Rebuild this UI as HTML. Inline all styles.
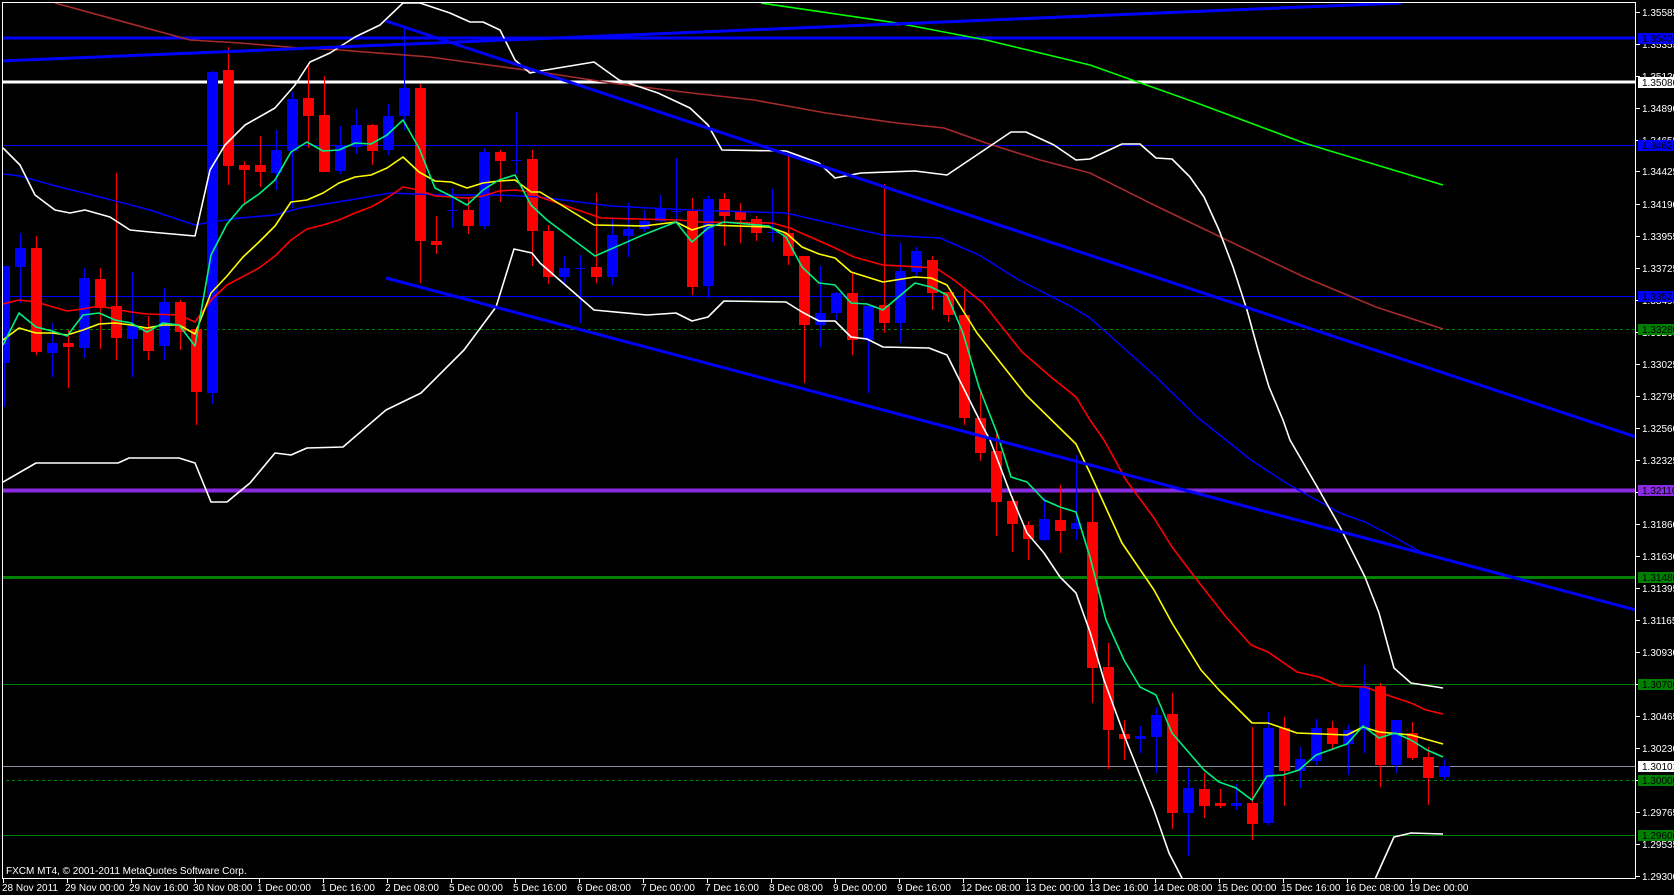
<!DOCTYPE html>
<html><head><meta charset="utf-8"><style>
html,body{margin:0;padding:0;background:#000;width:1674px;height:895px;overflow:hidden}
svg{display:block}
text{font-family:"Liberation Sans",sans-serif;font-size:10px}
</style></head><body>
<svg id="s" width="1674" height="895" xmlns="http://www.w3.org/2000/svg">
<defs><clipPath id="c"><rect x="3" y="3" width="1633" height="875"/></clipPath></defs>
<rect width="1674" height="895" fill="#000"/>
<g id="chart" clip-path="url(#c)">
<line x1="0" y1="38" x2="1636" y2="38" stroke="#0000ff" stroke-width="3"/>
<line x1="0" y1="82" x2="1636" y2="82" stroke="#fff" stroke-width="3"/>
<line x1="0" y1="145.5" x2="1636" y2="145.5" stroke="#0000ff" stroke-width="1"/>
<line x1="0" y1="296.5" x2="1636" y2="296.5" stroke="#0000ff" stroke-width="1"/>
<line x1="0" y1="329.5" x2="1636" y2="329.5" stroke="#008000" stroke-width="1" stroke-dasharray="3,3"/>
<line x1="0" y1="490.5" x2="1636" y2="490.5" stroke="#8a2be2" stroke-width="4"/>
<line x1="0" y1="577.5" x2="1636" y2="577.5" stroke="#008000" stroke-width="3"/>
<line x1="0" y1="684.5" x2="1636" y2="684.5" stroke="#008000" stroke-width="1"/>
<line x1="0" y1="766.5" x2="1636" y2="766.5" stroke="#8c8c9c" stroke-width="1"/>
<line x1="0" y1="780.5" x2="1636" y2="780.5" stroke="#008000" stroke-width="1" stroke-dasharray="3,3"/>
<line x1="0" y1="835.5" x2="1636" y2="835.5" stroke="#008000" stroke-width="1"/>
<g id="candles"></g>
<g id="ind" fill="none" stroke-linejoin="round"></g>
<line x1="0" y1="61" x2="1401" y2="3" stroke="#0000ff" stroke-width="3"/>
<line x1="386" y1="21" x2="1636" y2="437" stroke="#0000ff" stroke-width="3"/>
<line x1="386" y1="278" x2="1636" y2="610" stroke="#0000ff" stroke-width="3"/>
</g>
<rect x="2.5" y="2.5" width="1633" height="876" fill="none" stroke="#fff" stroke-width="1"/>
<text x="6" y="874" fill="#fff">FXCM MT4, © 2001-2011 MetaQuotes Software Corp.</text>
<g id="axis"></g>
</svg>
<script>
var NS="http://www.w3.org/2000/svg";
function el(p,n,a,t){var e=document.createElementNS(NS,n);for(var k in a)e.setAttribute(k,a[k]);if(t!==undefined)e.textContent=t;p.appendChild(e);return e;}
var C=[
"b 266 363 266 407","b 248 267 233 303","r 248 352 236 355","b 343 353 323 377","r 343 347 330 388","b 278 348 268 358","r 279 308 268 349","r 306 338 173 360","b 326 339 272 377","r 328 351 316 360",
"b 302 346 288 360","r 302 332 300 350","r 329 392 327 425","b 72 393 71 404","r 70 166 47 185","r 165 170 161 203","r 165 172 136 187","b 150 173 130 190","b 99 151 92 208","r 98 116 65 148",
"r 115 172 76 172","b 145 171 126 174","b 125 147 109 154","r 125 151 124 165","b 116 150 104 155","b 88 116 27 130","r 88 241 84 283","r 241 245 216 254","b 210 211 188 228","r 210 226 198 234",
"b 152 226 148 229","r 152 161 150 202","b 160 161 112 174","r 159 231 150 266","r 231 277 225 284","b 268 277 256 283","b 268 269 255 323","r 267 277 193 283","b 235 277 218 285","b 229 236 203 257",
"b 221 229 210 232","b 209 221 195 222","b 211 212 158 222","r 211 287 198 295","b 199 286 196 298","r 199 216 193 246","r 212 220 203 243","r 219 233 216 241","b 232 233 189 242","r 233 256 156 265",
"r 256 325 256 383","b 313 325 266 347","b 293 313 292 320","r 293 340 272 355","b 306 340 306 393","r 305 323 184 333","b 271 323 243 343","b 251 272 247 276","r 260 293 256 310","r 292 315 292 322",
"r 315 418 290 425","r 418 453 392 461","r 451 502 430 536","r 501 524 496 552","r 525 539 521 560","b 519 540 498 541","r 520 531 485 553","b 523 529 455 540","r 522 668 493 703","r 667 730 643 769",
"r 734 739 720 760","b 736 739 726 753","b 715 737 707 773","r 714 813 693 829","b 788 813 768 856","r 789 806 773 818","r 803 806 789 808","b 803 806 784 810","r 803 824 727 840","b 728 823 712 825",
"r 728 771 717 806","b 759 771 747 788","b 728 761 719 765","r 728 744 721 749","b 730 744 725 775","b 686 730 665 753","r 686 765 683 787","b 720 765 720 773","r 733 758 722 760","r 757 778 747 805","b 766 777 759 780"];
var g=document.getElementById("candles");
C.forEach(function(s,i){var a=s.split(" ");var col=a[0]=="b"?"#0000ff":"#ff0000";var t=+a[1],b=+a[2],h=+a[3],l=+a[4];var x=Math.round(3.6+16*i);
el(g,"rect",{x:x,y:h,width:1,height:Math.max(1,l-h),fill:col});
el(g,"rect",{x:x-5,y:t,width:11,height:Math.max(1,b-t),fill:col});});
var L={
"#a52a2a":"55,3 190,40 240,43 300,48 340,50 430,57 540,72 611,83 683,92 754,100 826,113 897,123 944,128 986,143 1040,160 1090,173 1154,205 1233,243 1304,277 1376,307 1443,329",
"#00ff00":"761,3 897,23 986,40 1090,65 1197,103 1304,143 1443,185",
"#0000ff":"3,174 20,176 52,185 100,197 150,210 195,225 211,222 240,218 275,215 300,208 350,200 390,193 440,195 500,195 540,197 611,206 690,210 786,213 851,228 883,235 940,238 979,255 1019,280 1072,307 1090,318 1126,350 1154,375 1197,417 1226,440 1251,460 1286,483 1340,513 1365,522 1394,537 1426,555 1447,560",
"#ff0000":"3,304 19,300 36,302 67,311 83,309 99,306 131,312 147,314 179,315 195,322 211,300 227,285 259,268 275,256 291,240 307,229 323,225 339,220 355,213 371,207 387,198 403,187 419,190 435,196 451,197 467,198 483,196 499,191 515,190 531,192 540,197 601,218 679,220 701,222 772,223 790,228 833,247 854,257 883,265 936,268 954,280 983,303 1022,352 1051,377 1076,397 1090,420 1104,440 1126,480 1154,518 1172,547 1197,580 1226,617 1251,645 1268,652 1297,672 1319,677 1340,686 1365,687 1390,696 1411,703 1426,710 1443,714",
"#ffff00":"3,340 19,328 36,333 52,333 67,335 83,330 99,324 115,323 131,325 147,328 163,325 179,325 195,334 211,293 227,276 243,257 259,242 275,226 291,202 307,200 323,193 339,183 355,177 371,175 387,168 403,157 419,172 435,181 451,182 467,188 483,183 499,181 515,180 531,192 540,192 594,225 644,226 676,222 692,230 708,225 769,227 786,233 802,247 819,254 835,258 851,272 883,282 915,277 931,278 947,285 977,333 1026,395 1076,444 1090,473 1122,543 1154,590 1172,623 1201,670 1219,690 1252,723 1268,723 1297,733 1347,735 1363,727 1379,732 1411,735 1443,744",
"#00f080":"3,345 19,313 36,327 52,331 67,336 83,315 99,313 115,320 131,323 147,332 163,323 179,325 195,346 211,255 227,224 243,205 259,194 275,180 291,152 307,142 323,151 339,150 355,143 371,144 387,135 403,120 419,148 435,188 451,196 467,205 483,190 499,180 515,175 531,205 547,220 595,256 643,235 676,222 692,242 708,228 724,222 769,226 786,237 802,267 819,283 835,285 851,303 867,304 883,310 915,283 931,287 947,295 963,333 979,387 997,433 1011,477 1027,482 1044,500 1060,507 1076,512 1090,557 1106,620 1124,660 1140,687 1156,695 1172,733 1204,770 1219,782 1236,788 1252,800 1267,776 1283,775 1299,770 1316,755 1347,744 1363,726 1379,738 1395,733 1411,740 1427,750 1443,757"
};
var ind=document.getElementById("ind");
for(var k in L){el(ind,"polyline",{points:L[k],stroke:k,"stroke-width":k=="#0000ff"?1.5:1.6});}
el(ind,"polyline",{points:"3,148 20,165 35,195 55,210 70,213 85,210 110,217 130,230 150,232 195,236 210,170 225,145 245,125 275,108 295,85 310,62 330,53 355,37 380,25 403,3 420,3 450,13 470,22 483,22 500,30 515,60 530,73 540,71 594,62 619,80 658,93 690,108 708,125 722,150 786,151 819,163 835,178 861,173 915,171 947,175 1011,132 1026,132 1054,145 1076,160 1090,159 1122,144 1140,144 1156,158 1172,159 1190,177 1204,197 1219,230 1233,267 1247,310 1258,350 1269,387 1283,420 1290,440 1319,490 1340,527 1365,577 1379,613 1394,668 1411,683 1443,688",stroke:"#fff","stroke-width":1.6});
el(ind,"polyline",{points:"3,482 36,463 118,463 129,458 179,458 195,463 211,502 227,502 250,483 275,453 291,455 307,448 343,447 386,410 421,393 464,350 496,307 514,249 532,253 540,263 594,310 647,315 676,313 692,321 708,317 724,301 786,302 802,312 819,321 835,321 851,337 867,339 883,347 929,348 947,355 963,387 983,427 990,440 1011,495 1027,533 1044,553 1060,577 1076,593 1090,632 1104,680 1126,740 1154,810 1169,853 1183,880 1190,900",stroke:"#fff","stroke-width":1.6});
el(ind,"polyline",{points:"1370,900 1376,877 1394,837 1411,833 1443,834",stroke:"#fff","stroke-width":1.6});
// axis
var ax=document.getElementById("axis");
function py(p){return 12+(1.35585-p)*13747;}
var P=["1.35585","1.35355","1.35120","1.34890","1.34655","1.34425","1.34190","1.33955","1.33725","1.33490","1.33260","1.33025","1.32795","1.32560","1.32325","1.32090","1.31860","1.31630","1.31395","1.31165","1.30930","1.30700","1.30465","1.30230","1.30000","1.29765","1.29535","1.29300"];
P.forEach(function(p){var y=Math.round(py(+p));el(ax,"rect",{x:1636,y:y,width:4,height:1,fill:"#fff"});el(ax,"text",{x:1642,y:y+4,fill:"#fff"},p);});
var B=[["1.35400",38,"#0000ff"],["1.35080",82,"#ffffff"],["1.34620",145,"#0000ff"],["1.33520",296,"#0000ff"],["1.33280",329,"#008000"],["1.32110",490,"#8a2be2"],["1.31480",577,"#008000"],["1.30700",684,"#008000"],["1.30101",766,"#ffffff"],["1.30000",780,"#008000"],["1.29600",835,"#008000"]];
B.forEach(function(b){el(ax,"rect",{x:1638,y:b[1]-5,width:36,height:11,fill:b[2]});el(ax,"text",{x:1642,y:b[1]+4,fill:"#000"},b[0]);});
el(ax,"rect",{x:1635,y:2,width:1,height:877,fill:"#fff"});
var T=["28 Nov 2011","29 Nov 00:00","29 Nov 16:00","30 Nov 08:00","1 Dec 00:00","1 Dec 16:00","2 Dec 08:00","5 Dec 00:00","5 Dec 16:00","6 Dec 08:00","7 Dec 00:00","7 Dec 16:00","8 Dec 08:00","9 Dec 00:00","9 Dec 16:00","12 Dec 08:00","13 Dec 00:00","13 Dec 16:00","14 Dec 08:00","15 Dec 00:00","15 Dec 16:00","16 Dec 08:00","19 Dec 00:00"];
T.forEach(function(t,i){var x=3+64*i;el(ax,"rect",{x:x,y:878,width:1,height:5,fill:"#fff"});el(ax,"text",{x:x+(i?-2:-1),y:891,fill:"#fff"},t);});
</script>
</body></html>
